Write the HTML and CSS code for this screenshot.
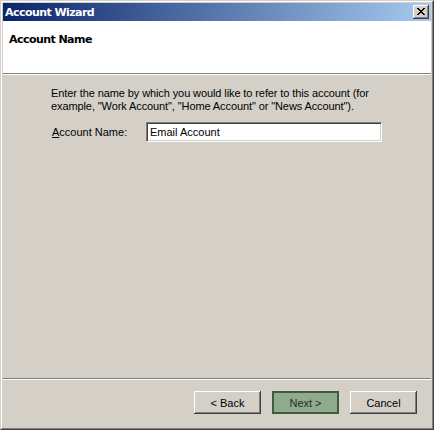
FILE: index.html
```html
<!DOCTYPE html>
<html>
<head>
<meta charset="utf-8">
<title>Account Wizard</title>
<link rel="stylesheet" href="styles.css">
</head>
<body>
<div class="window">
  <div class="frame">
    <div class="titlebar">
      <span class="title">Account Wizard</span>
      <span class="close">
        <svg width="8" height="7" viewBox="0 0 8 7" shape-rendering="crispEdges">
          <path d="M0 0h2v1h-2zM6 0h2v1h-2zM1 1h2v1h-2zM5 1h2v1h-2zM2 2h4v1h-4zM3 3h2v1h-2zM2 4h4v1h-4zM1 5h2v1h-2zM5 5h2v1h-2zM0 6h2v1h-2zM6 6h2v1h-2z" fill="#000"/>
        </svg>
      </span>
    </div>
    <div class="header">
      <div class="header-title">Account Name</div>
    </div>
    <div class="content">
      <p class="desc">Enter the name by which you would like to refer to this account (for example, "Work Account", "Home Account" or "News Account").</p>
      <div class="field-row">
        <label class="label"><u>A</u>ccount Name:</label>
        <div class="input">Email Account</div>
      </div>
    </div>
    <div class="footer">
      <div class="btn">&lt; Back</div>
      <div class="btn btn-default">Next &gt;</div>
      <div class="btn">Cancel</div>
    </div>
  </div>
</div>
</body>
</html>
```

FILE: styles.css
```css
* { box-sizing: border-box; }
html, body {
  margin: 0;
  padding: 0;
  background: #d4d0c8;
}
body {
  font-family: "Liberation Sans", Arial, sans-serif;
  font-size: 11px;
  color: #000;
}
.window {
  width: 434px;
  height: 430px;
  border: 1px solid;
  border-color: #d4d0c8 #404040 #404040 #d4d0c8;
  background: #d4d0c8;
}
.frame {
  height: 100%;
  border: 1px solid;
  border-color: #ffffff #808080 #808080 #ffffff;
  padding: 1px;
  display: flex;
  flex-direction: column;
}
.titlebar {
  height: 18px;
  flex: none;
  background: linear-gradient(to right, #0a246a, #a6caf0);
  display: flex;
  align-items: center;
  justify-content: space-between;
  padding: 0 2px 0 2px;
}
.title {
  color: #fff;
  font-weight: bold;
  font-size: 11px;
  font-family: "DejaVu Sans", sans-serif;
  letter-spacing: -0.55px;
}
.close {
  width: 16px;
  height: 14px;
  background: #d4d0c8;
  box-shadow: inset -1px -1px #404040, inset 1px 1px #ffffff, inset -2px -2px #808080;
  display: flex;
  align-items: center;
  justify-content: center;
  padding: 0 0 1px 0;
}
.close svg { display: block; }
.header {
  height: 53px;
  flex: none;
  background: #fff;
  padding: 12px 0 0 6px;
  border-bottom: 1px solid #808080;
  box-shadow: 0 1px 0 #ffffff;
}
.header-title {
  font-family: "DejaVu Sans", sans-serif;
  font-weight: bold;
  font-size: 11px;
  line-height: 13px;
  letter-spacing: -0.55px;
}
.content {
  flex: 1;
  margin-top: 1px;
  padding: 12px 0 0 48px;
  border-bottom: 1px solid #808080;
  box-shadow: 0 1px 0 #ffffff;
}
.desc {
  margin: 0;
  width: 340px;
  line-height: 13px;
  letter-spacing: -0.1px;
}
.field-row {
  display: flex;
  align-items: center;
  margin-top: 9px;
}
.label {
  width: 95px;
  padding-left: 1px;
}
.input {
  width: 236px;
  height: 20px;
  background: #fff;
  border: 1px solid;
  border-color: #808080 #ffffff #ffffff #808080;
  box-shadow: inset 1px 1px #404040, inset -1px -1px #d4d0c8;
  padding: 3px 0 0 3px;
  line-height: 13px;
}
.footer {
  height: 47px;
  flex: none;
  margin-top: 1px;
  display: flex;
  justify-content: flex-end;
  align-items: flex-start;
  padding: 11px 14px 0 0;
  gap: 11px;
}
.btn {
  width: 67px;
  height: 23px;
  display: flex;
  align-items: center;
  justify-content: center;
  background: #d4d0c8;
  box-shadow: inset -1px -1px #404040, inset 1px 1px #ffffff, inset -2px -2px #808080;
}
.btn-default {
  background: #8faa8c;
  color: #1e2e1e;
  box-shadow: inset 0 0 0 2px #3f5c3f;
}
```
